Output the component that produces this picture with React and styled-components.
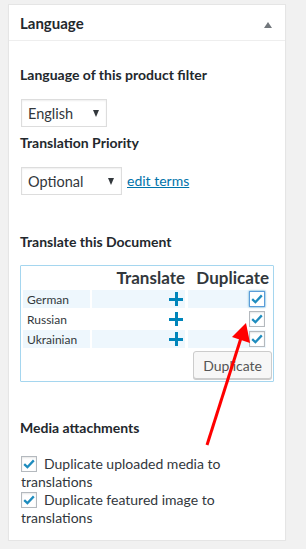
import React from 'react';
import styled, { createGlobalStyle } from 'styled-components';

const GlobalStyle = createGlobalStyle`
  html, body { margin: 0; padding: 0; }
  body {
    background: #f1f1f1;
    font-family: Lato, "Open Sans", sans-serif;
    color: #444;
  }
`;

const Page = styled.div`
  padding: 4px 0 0 8px;
  width: 278px;
  position: relative;
`;

const Panel = styled.div`
  background: #fff;
  border: 1px solid #e5e5e5;
  box-shadow: 0 1px 1px rgba(0, 0, 0, 0.04);
`;

const PanelHeader = styled.div`
  height: 35px;
  border-bottom: 1px solid #eee;
  display: flex;
  align-items: center;
  justify-content: space-between;
  padding: 0 13px 0 11px;
`;

const PanelTitle = styled.h2`
  margin: 0;
  font-size: 15px;
  font-weight: 700;
  color: #23282d;
`;

const Toggle = styled.span`
  width: 0;
  height: 0;
  border-left: 4px solid transparent;
  border-right: 4px solid transparent;
  border-bottom: 6px solid #72777c;
  margin-top: 5px;
`;

const Body = styled.div`
  padding: 0 11px 13px 11px;
`;

const SectionLabel = styled.h4`
  margin: ${p => p.$top}px 0 0 0;
  font-size: 14px;
  line-height: 18px;
  font-weight: 700;
  color: #23282d;
`;

const Row = styled.div`
  display: flex;
  align-items: center;
  gap: 5px;
  margin-top: ${p => p.$top}px;
`;

const Select = styled.div`
  box-sizing: border-box;
  width: ${p => p.$w}px;
  height: 28px;
  margin-left: 1px;
  border: 1px solid #ddd;
  box-shadow: inset 0 1px 2px rgba(0, 0, 0, 0.07);
  display: flex;
  align-items: center;
  justify-content: space-between;
  padding: 0 7px 0 6px;
  font-size: 14.5px;
  color: #32373c;
  background: #fff;
`;

const Caret = styled.span`
  width: 0;
  height: 0;
  border-left: 3.5px solid transparent;
  border-right: 3.5px solid transparent;
  border-top: 7px solid #32373c;
`;

const Link = styled.a`
  color: #0073aa;
  text-decoration: underline;
  font-size: 14px;
  margin-top: -2px;
`;

const TranslateBox = styled.div`
  box-sizing: border-box;
  width: 254px;
  margin-top: 14px;
  border: 1px solid #a5d6ef;
  border-radius: 1px;
  padding: 1px 3px 2px 2px;
`;

const Grid = styled.div`
  display: grid;
  grid-template-columns: 67px 93px 79px;
  column-gap: 2px;
  row-gap: 2px;
  & > :nth-child(3n) { margin-left: 1px; }
`;

const HeadCell = styled.div`
  height: 21px;
  font-size: 17px;
  font-weight: 700;
  color: #32373c;
  text-align: right;
  line-height: 21px;
  white-space: nowrap;
  margin-right: ${p => (p.$last ? -3 : 0)}px;
`;

const Cell = styled.div`
  height: 18px;
  background: ${p => (p.$alt ? '#eef7fd' : 'transparent')};
  font-size: 12px;
  color: #32373c;
  display: flex;
  align-items: center;
  justify-content: ${p => (p.$right ? 'flex-end' : 'flex-start')};
  padding: ${p => (p.$right ? '0 1px 0 0' : '0 0 0 4px')};
`;

const Plus = styled.span`
  position: relative;
  width: 14px;
  height: 14px;
  margin-right: 1px;
  &::before, &::after {
    content: '';
    position: absolute;
    background: #0085ba;
  }
  &::before { left: 0; top: 5.5px; width: 14px; height: 3px; }
  &::after { top: 0; left: 5.5px; width: 3px; height: 14px; }
`;

const Check = styled.span`
  box-sizing: border-box;
  display: inline-flex;
  align-items: center;
  justify-content: center;
  width: 16px;
  height: 16px;
  flex: none;
  border: 1px solid ${p => (p.$focus ? '#5b9dd9' : '#b4b9be')};
  box-shadow: ${p => (p.$focus ? '0 0 2px rgba(30,140,190,.8)' : 'inset 0 1px 2px rgba(0,0,0,.1)')};
  background: #fff;
`;

const CheckMark = () => (
  <svg width="12" height="10" viewBox="0 0 12 10">
    <path d="M1.2 5.2 L4.4 8.2 L10.8 1.4" fill="none" stroke="#1e8cbe" strokeWidth="2.3" />
  </svg>
);

const ButtonRow = styled.div`
  display: flex;
  justify-content: flex-end;
  margin-top: 3px;
  margin-right: -2px;
`;

const Button = styled.button`
  box-sizing: border-box;
  height: 28px;
  padding: 0 9px;
  font-family: inherit;
  font-size: 14px;
  color: #555;
  background: #f7f7f7;
  border: 1px solid #ccc;
  border-radius: 3px;
  box-shadow: 0 1px 0 #ccc;
`;

const OptionLabel = styled.label`
  display: block;
  font-size: 14px;
  line-height: 18px;
  color: #32373c;
  margin-top: ${p => p.$top}px;
  margin-left: 1px;
  & > span:first-child { vertical-align: top; margin-top: 1px; margin-right: 7px; }
`;

const Arrow = styled.svg`
  position: absolute;
  left: 0;
  top: 0;
  pointer-events: none;
`;

const rows = [
  { name: 'German', alt: true, focus: true },
  { name: 'Russian', alt: false },
  { name: 'Ukrainian', alt: true },
];

export default function App() {
  return (
    <>
      <GlobalStyle />
      <Page>
        <Panel>
          <PanelHeader>
            <PanelTitle>Language</PanelTitle>
            <Toggle />
          </PanelHeader>
          <Body>
            <SectionLabel $top={25}>Language of this product filter</SectionLabel>
            <Row $top={15}>
              <Select $w={86}>English<Caret /></Select>
            </Row>
            <SectionLabel $top={7}>Translation Priority</SectionLabel>
            <Row $top={15}>
              <Select $w={101}>Optional<Caret /></Select>
              <Link href="#">edit terms</Link>
            </Row>
            <SectionLabel $top={38}>Translate this Document</SectionLabel>
            <TranslateBox>
              <Grid>
                <HeadCell />
                <HeadCell>Translate</HeadCell>
                <HeadCell $last>Duplicate</HeadCell>
                {rows.map(r => (
                  <React.Fragment key={r.name}>
                    <Cell $alt={r.alt}>{r.name}</Cell>
                    <Cell $alt={r.alt} $right><Plus /></Cell>
                    <Cell $alt={r.alt} $right>
                      <Check $focus={r.focus}><CheckMark /></Check>
                    </Cell>
                  </React.Fragment>
                ))}
              </Grid>
              <ButtonRow>
                <Button>Duplicate</Button>
              </ButtonRow>
            </TranslateBox>
            <SectionLabel $top={37}>Media attachments</SectionLabel>
            <OptionLabel $top={18}>
              <Check><CheckMark /></Check>Duplicate uploaded media to translations
            </OptionLabel>
            <OptionLabel $top={0}>
              <Check><CheckMark /></Check>Duplicate featured image to translations
            </OptionLabel>
          </Body>
        </Panel>
        <Arrow width="306" height="549" viewBox="0 0 306 549">
          <line x1="207" y1="445" x2="241" y2="338" stroke="#ff0000" strokeWidth="3" />
          <polygon points="246,323 232,337 250,343" fill="#ff0000" />
        </Arrow>
      </Page>
    </>
  );
}
